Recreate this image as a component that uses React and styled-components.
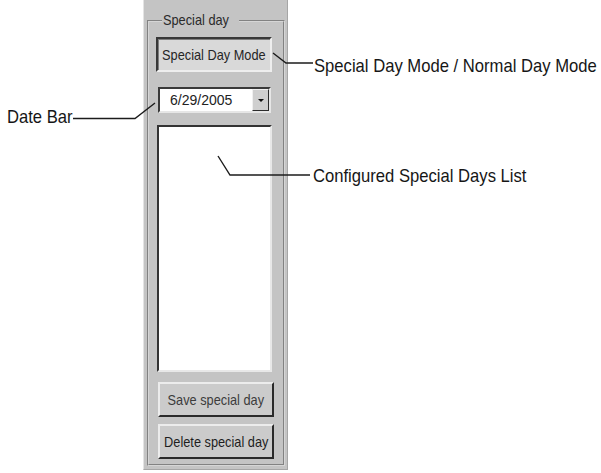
import React from "react";
import styled, { createGlobalStyle } from "styled-components";

const GlobalStyle = createGlobalStyle`
  html, body {
    margin: 0;
    padding: 0;
    background: #ffffff;
  }
`;

const Figure = styled.div`
  position: relative;
  width: 601px;
  height: 473px;
  overflow: hidden;
  background: #ffffff;
  font-family: "Liberation Sans", Arial, sans-serif;
`;

const Panel = styled.div`
  box-sizing: border-box;
  margin-left: 143px;
  width: 145px;
  height: 470px;
  padding: 12px 2px 3px 3px;
  background: #c4c4c4;
  border-left: 1px solid #e4e4e4;
  border-right: 1px solid #a6a6a6;
  border-bottom: 1px solid #a6a6a6;
  display: flex;
`;

const GroupBox = styled.fieldset`
  box-sizing: border-box;
  margin: 0;
  width: 138px;
  padding: 8px 9px 5px 8px;
  border: 2px groove #d6d6d6;
  display: flex;
  flex-direction: column;
  align-items: flex-start;
`;

const Legend = styled.legend`
  padding: 0 1px;
  margin-left: 5px;
  font-size: 14.5px;
  line-height: 17px;
  color: #2a2a2a;
`;

const Caption = styled.span`
  display: inline-block;
  white-space: nowrap;
  transform: scaleX(${(p) => p.$sx || 0.88});
  transform-origin: ${(p) => p.$origin || "center"};
`;

const ModeButton = styled.div`
  box-sizing: border-box;
  width: 116px;
  height: 35px;
  margin-left: -1px;
  background: #d9d9d9;
  border: 2px solid;
  border-color: #383838 #eeeeee #eeeeee #383838;
  box-shadow: inset 1px 1px 0 #7e7e7e;
  display: flex;
  align-items: center;
  justify-content: center;
  font-size: 14.5px;
  color: #262626;
`;

const DateBar = styled.div`
  box-sizing: border-box;
  width: 113px;
  height: 26px;
  margin-top: 15px;
  margin-left: 1px;
  background: #ffffff;
  border: 2px solid;
  border-color: #3a3a3a #e6e6e6 #e6e6e6 #3a3a3a;
  display: flex;
  align-items: stretch;
`;

const DateText = styled.div`
  flex: 1;
  padding-left: 10px;
  display: flex;
  align-items: center;
  font-size: 14px;
  color: #222222;
`;

const DropButton = styled.div`
  box-sizing: border-box;
  width: 17px;
  background: #cfcfcf;
  border: 1px solid;
  border-color: #f0f0f0 #2c2c2c #2c2c2c #f0f0f0;
  display: flex;
  align-items: center;
  justify-content: center;
`;

const Arrow = styled.span`
  width: 0;
  height: 0;
  border-left: 3px solid transparent;
  border-right: 3px solid transparent;
  border-top: 3px solid #111111;
`;

const DayList = styled.div`
  box-sizing: border-box;
  width: 115px;
  height: 247px;
  margin-top: 12px;
  background: #ffffff;
  border: 2px solid;
  border-color: #333333 #e8e8e8 #e8e8e8 #333333;
`;

const ActionButton = styled.div`
  box-sizing: border-box;
  width: 116px;
  height: 35px;
  margin-top: ${(p) => p.$gap}px;
  margin-left: 1px;
  background: #cbcbcb;
  border: 2px solid;
  border-color: #ececec #2a2a2a #2a2a2a #ececec;
  display: flex;
  align-items: center;
  justify-content: center;
  font-size: 14.5px;
  color: ${(p) => p.$color};
`;

const Leaders = styled.svg`
  position: absolute;
  left: 0;
  top: 0;
  pointer-events: none;
`;

const Callout = styled.div`
  position: absolute;
  left: ${(p) => p.$left}px;
  top: ${(p) => p.$top}px;
  font-size: 19px;
  line-height: 19px;
  color: #161616;
`;

const App = () => {
  return (
    <>
      <GlobalStyle />
      <Figure>
        <Panel>
          <GroupBox>
            <Legend>
              <Caption $origin="left">Special day</Caption>
            </Legend>
            <ModeButton>
              <Caption>Special Day Mode</Caption>
            </ModeButton>
            <DateBar>
              <DateText>6/29/2005</DateText>
              <DropButton>
                <Arrow />
              </DropButton>
            </DateBar>
            <DayList />
            <ActionButton $gap={10} $color="#3c3c3c">
              <Caption>Save special day</Caption>
            </ActionButton>
            <ActionButton $gap={7} $color="#1e1e1e">
              <Caption>Delete special day</Caption>
            </ActionButton>
          </GroupBox>
        </Panel>

        <Leaders width="601" height="473" viewBox="0 0 601 473">
          <g fill="none" stroke="#1c1c1c" strokeWidth="1.4">
            <polyline points="273,53 286,63 313,63" />
            <polyline points="73,118.5 135,118.5 155,103" />
            <polyline points="218,156 230,175 310,175" />
          </g>
        </Leaders>

        <Callout $left={314} $top={56}>
          <Caption $sx={0.875} $origin="left">Special Day Mode / Normal Day Mode</Caption>
        </Callout>
        <Callout $left={7} $top={107}>
          <Caption $sx={0.875} $origin="left">Date Bar</Caption>
        </Callout>
        <Callout $left={313} $top={166}>
          <Caption $sx={0.875} $origin="left">Configured Special Days List</Caption>
        </Callout>
      </Figure>
    </>
  );
};

export default App;
